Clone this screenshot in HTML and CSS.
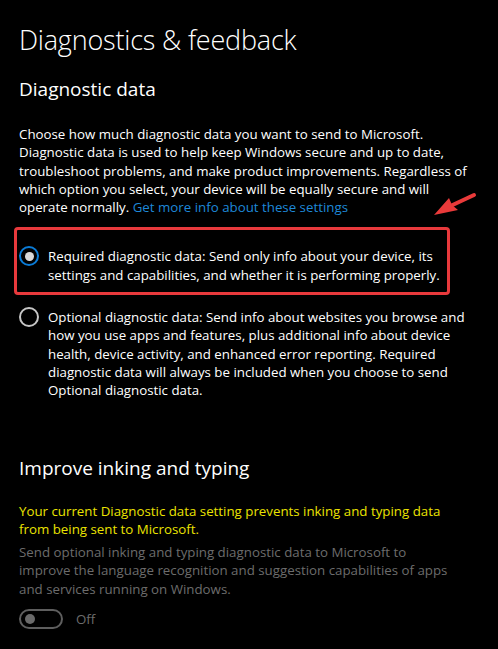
FILE: index.html
```html
<!DOCTYPE html>
<html lang="en">
<head>
<meta charset="utf-8">
<title>Diagnostics &amp; feedback</title>
<link rel="stylesheet" href="styles.css">
</head>
<body>
<main class="page">
  <h1 class="title">Diagnostics &amp; feedback</h1>
  <h2 class="section">Diagnostic data</h2>
  <p class="desc">Choose how much diagnostic data you want to send to Microsoft.<br>Diagnostic data is used to help keep Windows secure and up to date,<br>troubleshoot problems, and make product improvements. Regardless of<br>which option you select, your device will be equally secure and will<br>operate normally. <a class="link" href="#">Get more info about these settings</a></p>

  <div class="highlight">
    <label class="option">
      <span class="radio checked"><span class="dot"></span></span>
      <span class="opt-text">Required diagnostic data: Send only info about your device, its<br>settings and capabilities, and whether it is performing properly.</span>
    </label>
  </div>

  <label class="option option-2">
    <span class="radio"></span>
    <span class="opt-text">Optional diagnostic data: Send info about websites you browse and<br>how you use apps and features, plus additional info about device<br>health, device activity, and enhanced error reporting. Required<br>diagnostic data will always be included when you choose to send<br>Optional diagnostic data.</span>
  </label>

  <h2 class="section section-2">Improve inking and typing</h2>
  <p class="warning">Your current Diagnostic data setting prevents inking and typing data<br>from being sent to Microsoft.</p>
  <p class="disabled">Send optional inking and typing diagnostic data to Microsoft to<br>improve the language recognition and suggestion capabilities of apps<br>and services running on Windows.</p>
  <div class="toggle-row">
    <span class="toggle"><span class="knob"></span></span>
    <span class="toggle-label">Off</span>
  </div>
</main>
<svg class="arrow" width="498" height="649" viewBox="0 0 498 649" aria-hidden="true">
  <line x1="474" y1="195" x2="444" y2="209" stroke="#e93a3a" stroke-width="4" stroke-linecap="round"/>
  <polygon points="434,215 449,198 452,205 458,210" fill="#e93a3a"/>
</svg>
</body>
</html>
```
FILE: styles.css
```css
html, body {
  margin: 0;
  padding: 0;
  background: #000;
}
body {
  width: 498px;
  height: 649px;
  overflow: hidden;
  position: relative;
  font-family: "Open Sans", "Noto Sans", "Liberation Sans", sans-serif;
  color: #fff;
}
.page {
  padding: 22px 0 0 19px;
}
.title {
  margin: 0;
  font-size: 27px;
  font-weight: 300;
  line-height: 36px;
  letter-spacing: -0.2px;
}
.section {
  margin: 17px 0 0;
  font-size: 19px;
  font-weight: 400;
  line-height: 28px;
}
.desc {
  margin: 22px 0 0;
  font-size: 13.3px;
  line-height: 18.3px;
}
.link {
  color: #1e88d8;
  text-decoration: none;
}
.highlight {
  margin: 11px 0 0 -5px;
  width: 428px;
  border: 3px solid #e8393c;
  border-radius: 4px;
  padding: 17px 0 8px 2px;
}
.option {
  display: flex;
  gap: 9px;
  font-size: 13.3px;
  line-height: 18.3px;
}
.option-2 {
  margin-top: 13px;
}
.radio {
  flex: none;
  width: 20px;
  height: 20px;
  box-sizing: border-box;
  border: 2px solid #c6c6c6;
  border-radius: 50%;
  display: flex;
  align-items: center;
  justify-content: center;
  margin-top: -1px;
}
.radio.checked {
  border-color: #0a7bd6;
}
.dot {
  width: 9px;
  height: 9px;
  border-radius: 50%;
  background: #d8d8d8;
}
.section-2 {
  margin-top: 54px;
}
.warning {
  margin: 20px 0 0;
  font-size: 13.3px;
  line-height: 18.3px;
  color: #ebe300;
}
.disabled {
  margin: 5px 0 0;
  font-size: 13.3px;
  line-height: 18.3px;
  color: #6c6c6c;
}
.toggle-row {
  margin-top: 11px;
  display: flex;
  align-items: center;
  gap: 13px;
}
.toggle {
  width: 44px;
  height: 20px;
  box-sizing: border-box;
  border: 2px solid #5e5e5e;
  border-radius: 10px;
  display: flex;
  align-items: center;
  padding-left: 4px;
}
.knob {
  width: 10px;
  height: 10px;
  border-radius: 50%;
  background: #6a6a6a;
}
.toggle-label {
  font-size: 13.3px;
  color: #6c6c6c;
}
.arrow {
  position: absolute;
  left: 0;
  top: 0;
  pointer-events: none;
}
```
